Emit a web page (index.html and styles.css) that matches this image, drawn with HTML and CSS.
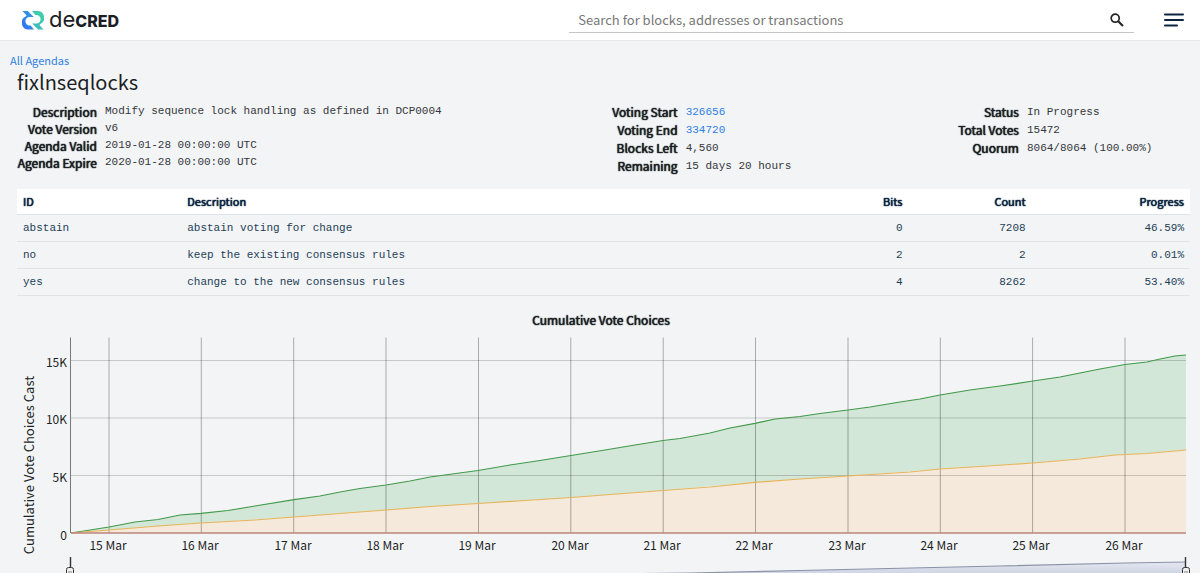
FILE: index.html
```html
<!DOCTYPE html>
<html lang="en">
<head>
<meta charset="utf-8">
<meta name="viewport" content="width=device-width, initial-scale=1">
<title>fixlnseqlocks</title>
<link rel="stylesheet" href="styles.css">
</head>
<body>
<header class="topbar">
  <a class="logo" href="#" aria-label="decred">
    <svg class="logo-mark" viewBox="0 0 22 19" aria-hidden="true">
      <defs>
        <linearGradient id="blue" x1="0" y1="1" x2="1" y2="0"><stop offset="0" stop-color="#2e6ffb"/><stop offset="1" stop-color="#35a3dc"/></linearGradient>
        <linearGradient id="green" x1="0" y1="1" x2="1" y2="0"><stop offset="0" stop-color="#3bb4c8"/><stop offset="1" stop-color="#41d4a0"/></linearGradient>
      </defs>
      <path fill="url(#blue)" d="M.5 0H5.800L11.800 6H7.600A4.200 4.200 0 0 0 7.600 14.400H8.600L12 18.500H7A6.800 6.800 0 0 1 3.600 5.600L4.600 4.600Z"/>
      <path fill="url(#green)" d="M21.500 18.500H16.200L10.200 12.500H14.400A4.200 4.200 0 0 0 14.400 4.100H13.400L10 0H15A6.800 6.800 0 0 1 18.400 12.900L17.400 13.900Z"/>
    </svg>
    <span class="logo-text">de<b class="logo-strong">CRED</b></span>
  </a>
  <form class="search" role="search">
    <input class="search-input" type="text" aria-label="Search" placeholder="Search for blocks, addresses or transactions">
    <button class="icon-button" type="button" aria-label="Search">
      <svg class="search-icon" viewBox="0 0 14 14"><circle cx="5.2" cy="5.2" r="4" fill="none" stroke="#222" stroke-width="1.7"/><path d="M8.2 8.2L13 13" stroke="#222" stroke-width="2"/></svg>
    </button>
  </form>
  <button class="icon-button" type="button" aria-label="Menu">
    <svg class="menu-icon" viewBox="0 0 20 14"><path d="M1 1.500H19M1 7H19M1 12.500H13" stroke="#0c2440" stroke-width="2" stroke-linecap="round"/></svg>
  </button>
</header>
<main class="content">
  <a class="link back" href="#">All Agendas</a>
  <h1 class="title">fixlnseqlocks</h1>
  <section class="facts">
    <dl class="fact-list">
      <dt>Description</dt><dd>Modify sequence lock handling as defined in DCP0004</dd>
      <dt>Vote Version</dt><dd>v6</dd>
      <dt>Agenda Valid</dt><dd>2019-01-28 00:00:00 UTC</dd>
      <dt>Agenda Expire</dt><dd>2020-01-28 00:00:00 UTC</dd>
    </dl>
    <dl class="fact-list fact-list-loose">
      <dt>Voting Start</dt><dd><a class="link" href="#">326656</a></dd>
      <dt>Voting End</dt><dd><a class="link" href="#">334720</a></dd>
      <dt>Blocks Left</dt><dd>4,560</dd>
      <dt>Remaining</dt><dd>15 days 20 hours</dd>
    </dl>
    <dl class="fact-list fact-list-loose">
      <dt>Status</dt><dd>In Progress</dd>
      <dt>Total Votes</dt><dd>15472</dd>
      <dt>Quorum</dt><dd>8064/8064 (100.00%)</dd>
    </dl>
  </section>
  <table class="choices">
    <thead>
      <tr><th class="col-id">ID</th><th>Description</th><th class="col-bits num">Bits</th><th class="col-count num">Count</th><th class="col-progress num">Progress</th></tr>
    </thead>
    <tbody>
      <tr><td>abstain</td><td>abstain voting for change</td><td class="num">0</td><td class="num">7208</td><td class="num">46.59%</td></tr>
      <tr><td>no</td><td>keep the existing consensus rules</td><td class="num">2</td><td class="num">2</td><td class="num">0.01%</td></tr>
      <tr><td>yes</td><td>change to the new consensus rules</td><td class="num">4</td><td class="num">8262</td><td class="num">53.40%</td></tr>
    </tbody>
  </table>
</main>
<svg class="chart" viewBox="0 310 1200 263" role="img" aria-label="Cumulative Vote Choices">
  <defs><linearGradient id="range" x1="0" y1="0" x2="0" y2="1"><stop offset="0" stop-color="#e4e7f0"/><stop offset="1" stop-color="#cfd5e4"/></linearGradient></defs>
  <text class="chart-title" x="601" y="325">Cumulative Vote Choices</text>
  <text class="axis-title" transform="translate(34 465) rotate(-90)">Cumulative Vote Choices Cast</text>
  <path fill="#d2e7d7" d="M71 533L109 527 135 522 158 519.500 180 515 201 513.300 228 510.500 255 506 294 499.700 320 496 340 492 360 488.500 386 485 410 481 430 477 478 470.500 510 465 540 460.500 571 455.500 605 450 635 445 663 440.500 680 438.500 710 433 730 428 755 423.300 775 419 800 416.500 820 413.500 848 410 870 407 900 402 920 399 940 395 970 390 1000 386 1033 381 1060 377 1080 373 1100 369 1125 364.500 1147 362 1160 359 1175 356 1186 355V450L1125 455 1080 459 1033 463 940 469 848 476 755 482 663 490.500 571 497.500 478 503.500 386 510 294 517 201 523 109 530Z"/>
  <path fill="#f4e9da" d="M71 533L109 530 158 526 201 523 255 520 294 517 340 513.500 386 510 430 506.500 478 503.500 525 500.500 571 497.500 617 494 663 490.500 710 487 755 482.300 800 479 848 476 910 472 940 469 980 466.500 1033 463 1080 459 1115 455 1147 453.500 1186 450V533Z"/>
  <g class="grid">
    <path d="M71 360.500H1186M71 418H1186M71 475.500H1186" stroke="#000" stroke-opacity=".18"/>
    <path d="M109 337.500V533M201.300 337.500V533M293.700 337.500V533M386 337.500V533M478.500 337.500V533M570.800 337.500V533M663.200 337.500V533M755.500 337.500V533M848 337.500V533M940.300 337.500V533M1032.600 337.500V533M1125 337.500V533" stroke="#000" stroke-opacity=".3"/>
    <path d="M70.500 337.500V533" stroke="#777"/>
  </g>
  <path class="line line-yes" d="M71 533L109 527 135 522 158 519.500 180 515 201 513.300 228 510.500 255 506 294 499.700 320 496 340 492 360 488.500 386 485 410 481 430 477 478 470.500 510 465 540 460.500 571 455.500 605 450 635 445 663 440.500 680 438.500 710 433 730 428 755 423.300 775 419 800 416.500 820 413.500 848 410 870 407 900 402 920 399 940 395 970 390 1000 386 1033 381 1060 377 1080 373 1100 369 1125 364.500 1147 362 1160 359 1175 356 1186 355"/>
  <path class="line line-abstain" d="M71 533L109 530 158 526 201 523 255 520 294 517 340 513.500 386 510 430 506.500 478 503.500 525 500.500 571 497.500 617 494 663 490.500 710 487 755 482.300 800 479 848 476 910 472 940 469 980 466.500 1033 463 1080 459 1115 455 1147 453.500 1186 450"/>
  <path d="M71 533H1186" stroke="#bd857b" stroke-width="1.500"/>
  <g class="tick tick-y">
    <text x="67" y="367">15K</text><text x="67" y="424">10K</text><text x="67" y="482">5K</text><text x="67" y="540">0</text>
  </g>
  <g class="tick">
    <text x="108" y="550">15 Mar</text><text x="200" y="550">16 Mar</text><text x="293" y="550">17 Mar</text><text x="385" y="550">18 Mar</text><text x="477" y="550">19 Mar</text><text x="570" y="550">20 Mar</text><text x="662" y="550">21 Mar</text><text x="754" y="550">22 Mar</text><text x="847" y="550">23 Mar</text><text x="939" y="550">24 Mar</text><text x="1031" y="550">25 Mar</text><text x="1124" y="550">26 Mar</text>
  </g>
  <path fill="url(#range)" d="M680 573.500L800 570.500 1000 566 1125 563 1186 562V573Z"/>
  <path d="M500 573.500H640L690 573 800 570.500 1000 566 1125 563 1186 562" fill="none" stroke="#8a92a6" stroke-width="1.200"/>
  <g fill="#eee" stroke="#333">
    <path d="M70.500 557V568M1185.500 557V568" stroke-width="1.400"/>
    <rect x="66.500" y="567.500" width="7" height="12" rx="2"/><path d="M69 571V579M71 571V579" stroke="#888"/>
    <rect x="1182.500" y="567.500" width="7" height="12" rx="2"/><path d="M1185 571V579M1187 571V579" stroke="#888"/>
  </g>
</svg>
</body>
</html>
```
FILE: styles.css
```css
* { box-sizing: border-box; }
body {
  margin: 0;
  background: #f3f4f6;
  color: #1c1f24;
  font-family: "Noto Sans CJK SC", "Open Sans", sans-serif;
  font-size: 12px;
  line-height: 18px;
}
.topbar {
  display: flex;
  align-items: center;
  height: 41px;
  padding: 0 16px 0 22px;
  background: #fff;
  border-bottom: 1px solid #e6e8ea;
}
.logo { display: flex; align-items: center; gap: 5px; color: #1b1e25; text-decoration: none; }
.logo-mark { width: 22px; height: 19px; }
.logo-text { font-family: Inter, sans-serif; font-size: 22px; line-height: 24px; }
.logo-strong { font-size: 16px; font-weight: 800; }
.search {
  display: flex;
  align-items: center;
  width: 48.6%;
  height: 26px;
  margin-left: auto;
  margin-right: 30px;
  border-bottom: 1px solid #c4c6c8;
}
.search-input {
  flex: 1;
  min-width: 0;
  padding: 0 9px;
  border: 0;
  outline: 0;
  background: none;
  color: inherit;
  font: inherit;
  font-size: 13px;
}
.search-input::placeholder { color: #777; opacity: 1; }
.icon-button { display: flex; padding: 0; border: 0; background: none; }
.search .icon-button { margin-right: 10px; }
.search-icon { width: 14px; height: 14px; }
.menu-icon { width: 20px; height: 14px; }
.content { padding: 10px 10px 0; }
.link { color: #2f80e0; text-decoration: none; }
.back { display: block; font-size: 11px; line-height: 18px; }
.title { margin: 0 7px; font-size: 20px; line-height: 26px; font-weight: 400; }
.facts {
  display: grid;
  grid-template-columns: 49.5% 29.1% 1fr;
  margin: 8px 0 14px 7px;
}
.fact-list {
  display: grid;
  grid-template-columns: 80px 1fr;
  column-gap: 8px;
  align-content: start;
  margin: 0;
  line-height: 17px;
}
.fact-list-loose { line-height: 18px; }
.fact-list dt, .choices th, .chart-title {
  font-weight: 400;
  text-shadow: 0 0 1px currentColor, 0 0 1px currentColor;
}
.fact-list dt { text-align: right; white-space: nowrap; }
.fact-list dd { margin: 0; color: #33373c; font-family: "Liberation Mono", monospace; font-size: 11px; }
.choices {
  width: calc(100% - 7px);
  margin-left: 7px;
  border-collapse: collapse;
  table-layout: fixed;
  color: #1d3e56;
}
.choices th {
  height: 25px;
  padding: 0 6px 1px;
  background: #fff;
  color: #0c2440;
  font-size: 11px;
  text-align: left;
}
.choices td {
  height: 27px;
  padding: 0 6px;
  border-top: 1px solid #e0e4e7;
  border-bottom: 1px solid #e0e4e7;
  font-family: "Liberation Mono", monospace;
  font-size: 11px;
}
.choices .num { text-align: right; }
.col-id { width: 14%; }
.col-bits { width: 10%; }
.col-count { width: 10.5%; }
.col-progress { width: 13.5%; }
.chart { display: block; width: 100%; margin-top: 14px; fill: #1c1f24; }
.chart-title { font-size: 12px; text-anchor: middle; }
.axis-title { font-size: 13px; text-anchor: middle; }
.tick { font-size: 12px; text-anchor: middle; }
.tick-y { text-anchor: end; }
.line { fill: none; stroke-width: 1.2; }
.line-yes { stroke: #42994a; }
.line-abstain { stroke: #e8b458; }
```
